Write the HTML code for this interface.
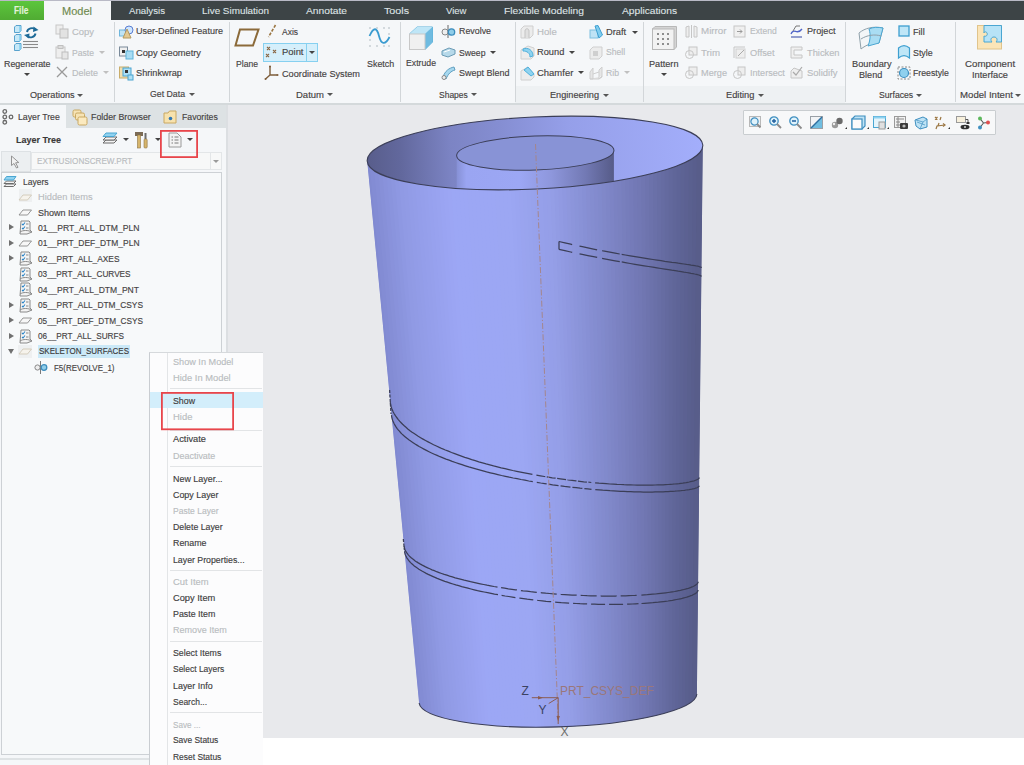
<!DOCTYPE html>
<html><head><meta charset="utf-8">
<style>
html,body{margin:0;padding:0;}
body{width:1024px;height:765px;overflow:hidden;position:relative;background:#ffffff;font-family:"Liberation Sans",sans-serif;}
.t{position:absolute;white-space:nowrap;font-size:9.4px;line-height:12px;color:#454242;-webkit-text-stroke:0.15px currentColor;}
.d{color:#b9bcbf;}
.tab{color:#dfe3e5;font-size:10px;}
svg{overflow:visible}
</style></head><body>
<div style="position:absolute;left:0px;top:0px;width:1024px;height:1px;background:#b9bac6"></div>
<div style="position:absolute;left:0px;top:1px;width:1024px;height:19px;background:#3d4446"></div>
<div style="position:absolute;left:0px;top:1px;width:44px;height:19px;background:linear-gradient(#5cc63c,#50ab33)"></div>
<div style="position:absolute;left:44px;top:1px;width:67px;height:19px;background:#f5f7f8"></div>
<div style="position:absolute;left:0px;top:20px;width:1024px;height:83px;background:#f5f7f9"></div>
<div style="position:absolute;left:515px;top:86px;width:330px;height:17px;background:#eef1f3"></div>
<div style="position:absolute;left:0px;top:103px;width:1024px;height:2px;background:#d4d9db"></div>
<div class="t " style="left:14px;top:4.90px;font-size:10px;color:#e2f2da;font-weight:bold;transform:scaleX(0.8355);transform-origin:0 0;">File</div>
<div class="t " style="left:62px;top:4.90px;font-size:10.5px;color:#6f8a4f;transform:scaleX(1.0486);transform-origin:0 0;">Model</div>
<div class="t tab" style="left:129px;top:4.90px;font-size:9.6px;-webkit-text-stroke:0.1px currentColor;transform:scaleX(1.0074);transform-origin:0 0;">Analysis</div>
<div class="t tab" style="left:202px;top:4.90px;font-size:9.6px;-webkit-text-stroke:0.1px currentColor;transform:scaleX(1.0298);transform-origin:0 0;">Live Simulation</div>
<div class="t tab" style="left:306px;top:4.90px;font-size:9.6px;-webkit-text-stroke:0.1px currentColor;transform:scaleX(1.0671);transform-origin:0 0;">Annotate</div>
<div class="t tab" style="left:384px;top:4.90px;font-size:9.6px;-webkit-text-stroke:0.1px currentColor;transform:scaleX(1.1158);transform-origin:0 0;">Tools</div>
<div class="t tab" style="left:446px;top:4.90px;font-size:9.6px;-webkit-text-stroke:0.1px currentColor;transform:scaleX(0.9939);transform-origin:0 0;">View</div>
<div class="t tab" style="left:504px;top:4.90px;font-size:9.6px;-webkit-text-stroke:0.1px currentColor;transform:scaleX(1.0716);transform-origin:0 0;">Flexible Modeling</div>
<div class="t tab" style="left:622px;top:4.90px;font-size:9.6px;-webkit-text-stroke:0.1px currentColor;transform:scaleX(1.0631);transform-origin:0 0;">Applications</div>
<div style="position:absolute;left:114px;top:22px;width:1px;height:80px;background:#d2d6d9"></div>
<div style="position:absolute;left:229px;top:22px;width:1px;height:80px;background:#d2d6d9"></div>
<div style="position:absolute;left:400px;top:22px;width:1px;height:80px;background:#d2d6d9"></div>
<div style="position:absolute;left:515px;top:22px;width:1px;height:80px;background:#d2d6d9"></div>
<div style="position:absolute;left:643px;top:22px;width:1px;height:80px;background:#d2d6d9"></div>
<div style="position:absolute;left:845px;top:22px;width:1px;height:80px;background:#d2d6d9"></div>
<div style="position:absolute;left:955px;top:22px;width:1px;height:80px;background:#d2d6d9"></div>
<div style="position:absolute;left:228px;top:105px;width:796px;height:633px;background:#e8e9ec"></div>
<div style="position:absolute;left:0px;top:105px;width:228px;height:660px;background:#f5f7f9"></div>
<svg style="position:absolute;left:13px;top:24px" width="27" height="27" viewBox="0 0 27 27">
<g stroke="#4a9ac8" stroke-width="0.9" fill="#c6e8f7">
<path d="M1.5 3 L3 1.5 L8 1.5 L8 7 L6.5 8.5 L1.5 8.5Z"/><path d="M1.5 12 L3 10.5 L8 10.5 L8 16 L6.5 17.5 L1.5 17.5Z"/><path d="M1.5 21 L3 19.5 L8 19.5 L8 25 L6.5 26.5 L1.5 26.5Z"/></g>
<g fill="#7fcdef"><rect x="6.3" y="2" width="1.5" height="6"/><rect x="6.3" y="11" width="1.5" height="6"/><rect x="6.3" y="20" width="1.5" height="6"/></g>
<g stroke="#8a8a8a" stroke-width="1.1"><line x1="10" y1="17.5" x2="25" y2="17.5"/><line x1="10" y1="20.5" x2="25" y2="20.5"/><line x1="10" y1="23.5" x2="25" y2="23.5"/></g>
<path d="M14 8 A5 4.5 0 0 1 22.5 5.5" stroke="#1d6a98" stroke-width="1.9" fill="none"/><path d="M20.5 2.5 L25.5 6 L20 8 Z" fill="#1d6a98"/>
<path d="M22.5 9.5 A5 4.5 0 0 1 14 12" stroke="#1d6a98" stroke-width="1.9" fill="none"/><path d="M16 14.5 L11 11 L16.5 9.5 Z" fill="#1d6a98"/>
</svg>
<div class="t " style="left:3.5px;top:58.10px;font-size:9.6px;transform:scaleX(0.9274);transform-origin:0 0;">Regenerate</div>
<div style="position:absolute;left:23.5px;top:73px;width:0;height:0;border-left:3px solid transparent;border-right:3px solid transparent;border-top:3px solid #444;"></div>
<svg style="position:absolute;left:55px;top:24px" width="15" height="15" viewBox="0 0 15 15"><rect x="1" y="1" width="7" height="9" fill="#eee" stroke="#c8c8c8"/><rect x="5" y="5" width="8" height="9" fill="#e2e2e2" stroke="#bdbdbd"/></svg>
<div class="t d" style="left:72px;top:25.60px;font-size:9.6px;transform:scaleX(0.9819);transform-origin:0 0;">Copy</div>
<svg style="position:absolute;left:55px;top:45px" width="15" height="15" viewBox="0 0 15 15"><rect x="1" y="2" width="9" height="11" fill="#eee" stroke="#c8c8c8"/><rect x="3" y="0.5" width="5" height="3" fill="#ddd" stroke="#c0c0c0"/><rect x="7" y="7" width="6" height="7" fill="#e6e6e6" stroke="#bdbdbd"/></svg>
<div class="t d" style="left:72px;top:46.80px;font-size:9.6px;transform:scaleX(0.8962);transform-origin:0 0;">Paste</div>
<div style="position:absolute;left:99px;top:51px;width:0;height:0;border-left:3px solid transparent;border-right:3px solid transparent;border-top:3px solid #c0c0c0;"></div>
<svg style="position:absolute;left:56px;top:66px" width="12" height="12" viewBox="0 0 12 12"><path d="M1 1 L11 11 M11 1 L1 11" stroke="#9a9a9a" stroke-width="1.3"/></svg>
<div class="t d" style="left:72px;top:66.80px;font-size:9.6px;transform:scaleX(0.9375);transform-origin:0 0;">Delete</div>
<div style="position:absolute;left:103px;top:71px;width:0;height:0;border-left:3px solid transparent;border-right:3px solid transparent;border-top:3px solid #c0c0c0;"></div>
<div class="t " style="left:30px;top:89.10px;font-size:9.6px;transform:scaleX(0.9523);transform-origin:0 0;">Operations</div>
<div style="position:absolute;left:77px;top:93.5px;width:0;height:0;border-left:3px solid transparent;border-right:3px solid transparent;border-top:3px solid #555;"></div>
<svg style="position:absolute;left:119px;top:25px" width="15" height="14" viewBox="0 0 15 14"><rect x="0.5" y="5" width="7" height="6" fill="#bfe3f5" stroke="#6fb6dc"/><circle cx="10" cy="5" r="4" fill="#cfe6ff" stroke="#5a7ed0"/><path d="M4 13 L8 4 L12 13 Z" fill="#e3c891" stroke="#b49a60"/></svg>
<div class="t " style="left:136px;top:25.40px;font-size:9.6px;transform:scaleX(0.9431);transform-origin:0 0;">User-Defined Feature</div>
<svg style="position:absolute;left:119px;top:46px" width="15" height="14" viewBox="0 0 15 14"><rect x="0.5" y="1" width="8" height="9" fill="#f0f0f0" stroke="#7a8a9a"/><rect x="3" y="4" width="3" height="3" fill="#333"/><rect x="7" y="5" width="7" height="8" fill="#a8dcf3" stroke="#5fb3da"/></svg>
<div class="t " style="left:136px;top:47.00px;font-size:9.6px;transform:scaleX(0.9674);transform-origin:0 0;">Copy Geometry</div>
<svg style="position:absolute;left:119px;top:66px" width="15" height="14" viewBox="0 0 15 14"><rect x="0.5" y="1" width="9" height="11" fill="#f2dfb0" stroke="#c9ad6a"/><rect x="4" y="2" width="8" height="8" fill="#aee0f5" stroke="#4ba4d0"/><rect x="6" y="4" width="3" height="3" fill="#333"/><rect x="9" y="9" width="5" height="5" fill="#aee0f5" stroke="#4ba4d0"/></svg>
<div class="t " style="left:136px;top:66.90px;font-size:9.6px;transform:scaleX(0.9583);transform-origin:0 0;">Shrinkwrap</div>
<div class="t " style="left:150px;top:88.10px;font-size:9.6px;transform:scaleX(0.9113);transform-origin:0 0;">Get Data</div>
<div style="position:absolute;left:189px;top:92.5px;width:0;height:0;border-left:3px solid transparent;border-right:3px solid transparent;border-top:3px solid #555;"></div>
<svg style="position:absolute;left:234px;top:28px" width="26" height="19" viewBox="0 0 26 19"><path d="M6 1.5 L24.5 1.5 L19 17.5 L1.5 17.5 Z" fill="none" stroke="#8b6a3a" stroke-width="2"/></svg>
<div class="t " style="left:236px;top:57.80px;font-size:9.6px;transform:scaleX(0.8962);transform-origin:0 0;">Plane</div>
<svg style="position:absolute;left:267px;top:24px" width="10" height="14" viewBox="0 0 10 14"><path d="M8.5 1 L1.5 13" stroke="#9b7642" stroke-width="1.6" stroke-dasharray="3 1.5"/></svg>
<div class="t " style="left:282px;top:25.80px;font-size:9.6px;transform:scaleX(0.8828);transform-origin:0 0;">Axis</div>
<div style="position:absolute;left:263px;top:43px;width:55px;height:19px;background:#d5effb;border:1px solid #86d0f0;box-sizing:border-box"></div>
<div style="position:absolute;left:306px;top:43px;width:1px;height:19px;background:#86d0f0"></div>
<svg style="position:absolute;left:264px;top:46px" width="14" height="14" viewBox="0 0 14 14"><g stroke="#8c6a48" stroke-width="1.1"><path d="M3 1 L6 4 M6 1 L3 4 M9 4 L12 7 M12 4 L9 7 M2 8 L5 11 M5 8 L2 11"/></g></svg>
<div class="t " style="left:282px;top:46.40px;font-size:9.6px;transform:scaleX(0.9829);transform-origin:0 0;">Point</div>
<div style="position:absolute;left:309px;top:51px;width:0;height:0;border-left:3px solid transparent;border-right:3px solid transparent;border-top:3px solid #444;"></div>
<svg style="position:absolute;left:264px;top:65px" width="15" height="15" viewBox="0 0 15 15"><path d="M6 1 L6 10 L13 10 M6 10 L1.5 14" stroke="#7d5d3a" stroke-width="1.4" fill="none"/><circle cx="6" cy="1.5" r="1" fill="#7d5d3a"/><circle cx="13.5" cy="10" r="1" fill="#7d5d3a"/><circle cx="1.5" cy="14" r="1" fill="#7d5d3a"/></svg>
<div class="t " style="left:282px;top:67.50px;font-size:9.6px;transform:scaleX(0.9560);transform-origin:0 0;">Coordinate System</div>
<svg style="position:absolute;left:368px;top:26px" width="23" height="22" viewBox="0 0 23 22"><g fill="#9aa5ad"><circle cx="2" cy="2" r="0.7"/><circle cx="9" cy="2" r="0.7"/><circle cx="16" cy="2" r="0.7"/><circle cx="21" cy="2" r="0.7"/><circle cx="2" cy="20" r="0.7"/><circle cx="9" cy="20" r="0.7"/><circle cx="16" cy="20" r="0.7"/><circle cx="21" cy="20" r="0.7"/><circle cx="2" cy="14" r="0.7"/><circle cx="21" cy="8" r="0.7"/></g><path d="M1.5 10 C6 0, 9 2, 11 10 C13 18, 17 20, 21.5 11" fill="none" stroke="#3a9bd0" stroke-width="1.8"/></svg>
<div class="t " style="left:366.5px;top:57.80px;font-size:9.6px;transform:scaleX(0.9269);transform-origin:0 0;">Sketch</div>
<div class="t " style="left:296px;top:88.60px;font-size:9.6px;transform:scaleX(0.9906);transform-origin:0 0;">Datum</div>
<div style="position:absolute;left:327px;top:93px;width:0;height:0;border-left:3px solid transparent;border-right:3px solid transparent;border-top:3px solid #555;"></div>
<svg style="position:absolute;left:408px;top:25px" width="26" height="26" viewBox="0 0 26 26"><path d="M1.5 9 L9 2 L24.5 2 L24.5 17 L17 24.5 Z" fill="#8ccfee" stroke="#5cb0d8"/><path d="M9 2 L24.5 2 L17 9 L1.5 9Z" fill="#bfe6f7"/><path d="M17 9 L24.5 2 L24.5 17 L17 24.5Z" fill="#6fbbe0"/><rect x="1.5" y="9" width="15.5" height="15.5" fill="#f0f0f0" stroke="#c8c8c8"/></svg>
<div class="t " style="left:406px;top:57.10px;font-size:9.6px;transform:scaleX(0.9069);transform-origin:0 0;">Extrude</div>
<svg style="position:absolute;left:441px;top:25px" width="15" height="13" viewBox="0 0 15 13"><line x1="7" y1="0" x2="7" y2="13" stroke="#666" stroke-width="1"/><circle cx="4" cy="7" r="3" fill="#eee" stroke="#888"/><circle cx="10.5" cy="7" r="3.2" fill="#8fcde9" stroke="#3c8dbd" stroke-width="1.3"/></svg>
<div class="t " style="left:458.5px;top:25.40px;font-size:9.6px;transform:scaleX(0.9229);transform-origin:0 0;">Revolve</div>
<svg style="position:absolute;left:441px;top:46px" width="15" height="12" viewBox="0 0 15 12"><path d="M1 5 L8 2 L14 4 L14 8 L7 11 L1 9 Z" fill="#b6d9ea" stroke="#6b9bb5"/><path d="M3 6 L9 4" stroke="#fff"/></svg>
<div class="t " style="left:458.5px;top:46.60px;font-size:9.6px;transform:scaleX(0.9031);transform-origin:0 0;">Sweep</div>
<div style="position:absolute;left:490px;top:51px;width:0;height:0;border-left:3px solid transparent;border-right:3px solid transparent;border-top:3px solid #444;"></div>
<svg style="position:absolute;left:441px;top:65px" width="15" height="15" viewBox="0 0 15 15"><path d="M2 12 C4 6, 8 3, 13 2 L14 5 C10 6, 7 9, 5 14 Z" fill="#a7d8ef" stroke="#5f9fc0"/><circle cx="3" cy="12.5" r="2" fill="#eee" stroke="#888"/></svg>
<div class="t " style="left:458.5px;top:66.90px;font-size:9.6px;transform:scaleX(0.9374);transform-origin:0 0;">Swept Blend</div>
<div class="t " style="left:439px;top:88.60px;font-size:9.6px;transform:scaleX(0.8849);transform-origin:0 0;">Shapes</div>
<div style="position:absolute;left:471px;top:93px;width:0;height:0;border-left:3px solid transparent;border-right:3px solid transparent;border-top:3px solid #555;"></div>
<svg style="position:absolute;left:520px;top:25px" width="15" height="14" viewBox="0 0 15 14"><path d="M1 4 L4 1 L13 1 L13 10 L10 13 L1 13Z" fill="#ececec" stroke="#cfcfcf"/><path d="M5 13 L5 6 C5 3, 9 3, 9 6 L9 13" fill="#e0e0e0" stroke="#c4c4c4"/></svg>
<div class="t d" style="left:536.7px;top:25.80px;font-size:9.6px;transform:scaleX(1.0033);transform-origin:0 0;">Hole</div>
<svg style="position:absolute;left:520px;top:45px" width="15" height="15" viewBox="0 0 15 15"><path d="M1 5 L1 14 L11 14 L14 11 L14 3 L8 1 Z" fill="#ececec" stroke="#d0d0d0"/><path d="M3 4 C8 2, 13 5, 13 11 L10 12 C10 8, 7 6, 3 6Z" fill="#8fd3f0" stroke="#4fb0dc"/></svg>
<div class="t " style="left:536.7px;top:46.30px;font-size:9.6px;transform:scaleX(0.9653);transform-origin:0 0;">Round</div>
<div style="position:absolute;left:569px;top:51px;width:0;height:0;border-left:3px solid transparent;border-right:3px solid transparent;border-top:3px solid #444;"></div>
<svg style="position:absolute;left:520px;top:66px" width="15" height="15" viewBox="0 0 15 15"><path d="M1 5 L1 14 L11 14 L14 11 L14 8 L8 1 Z" fill="#ececec" stroke="#d0d0d0"/><path d="M4 4 L8 1 L14 8 L11 10Z" fill="#8fd3f0" stroke="#4fb0dc"/></svg>
<div class="t " style="left:536.7px;top:66.80px;font-size:9.6px;transform:scaleX(0.9865);transform-origin:0 0;">Chamfer</div>
<div style="position:absolute;left:578px;top:71px;width:0;height:0;border-left:3px solid transparent;border-right:3px solid transparent;border-top:3px solid #444;"></div>
<svg style="position:absolute;left:589px;top:25px" width="14" height="14" viewBox="0 0 14 14"><rect x="1" y="5" width="8" height="8" fill="#bfe3f5" stroke="#7ec0e0"/><path d="M6 1 L9 0.5 L13.5 10 L10 13 Z" fill="#7fcdf0" stroke="#3e9fd0"/></svg>
<div class="t " style="left:605.8px;top:25.80px;font-size:9.6px;transform:scaleX(0.9713);transform-origin:0 0;">Draft</div>
<div style="position:absolute;left:631.5px;top:30.5px;width:0;height:0;border-left:3px solid transparent;border-right:3px solid transparent;border-top:3px solid #444;"></div>
<svg style="position:absolute;left:589px;top:46px" width="14" height="14" viewBox="0 0 14 14"><path d="M1 4 L4 1 L13 1 L13 10 L10 13 L1 13Z" fill="#ececec" stroke="#cfcfcf"/><rect x="4" y="5" width="5" height="5" fill="#cfcfcf"/></svg>
<div class="t d" style="left:605.8px;top:46.30px;font-size:9.6px;transform:scaleX(0.8996);transform-origin:0 0;">Shell</div>
<svg style="position:absolute;left:589px;top:66px" width="14" height="14" viewBox="0 0 14 14"><path d="M1 6 L4 2 L4 13 L1 13Z M10 4 L13 1 L13 11 L10 13Z M1 13 L10 13 L13 10" fill="#e6e6e6" stroke="#cfcfcf"/><path d="M4 8 L10 6" stroke="#cfcfcf"/></svg>
<div class="t d" style="left:605.8px;top:66.80px;font-size:9.6px;transform:scaleX(0.9024);transform-origin:0 0;">Rib</div>
<div style="position:absolute;left:624px;top:71px;width:0;height:0;border-left:3px solid transparent;border-right:3px solid transparent;border-top:3px solid #c0c0c0;"></div>
<div class="t " style="left:550px;top:89.40px;font-size:9.6px;transform:scaleX(0.9567);transform-origin:0 0;">Engineering</div>
<div style="position:absolute;left:602.7px;top:93.5px;width:0;height:0;border-left:3px solid transparent;border-right:3px solid transparent;border-top:3px solid #555;"></div>
<svg style="position:absolute;left:651px;top:25px" width="27" height="26" viewBox="0 0 27 26"><path d="M1.5 4 L4 1.5 L25.5 1.5 L25.5 22 L23 24.5 Z" fill="#d4d4d4" stroke="#b8b8b8"/><rect x="1.5" y="4" width="21.5" height="20.5" fill="#f2f2f2" stroke="#b8b8b8"/><g fill="#8e8e8e"><rect x="6" y="8" width="2" height="2"/><rect x="11" y="8" width="2" height="2"/><rect x="16" y="8" width="2" height="2"/><rect x="6" y="13" width="2" height="2"/><rect x="11" y="13" width="2" height="2"/><rect x="16" y="13" width="2" height="2"/><rect x="6" y="18" width="2" height="2"/><rect x="11" y="18" width="2" height="2"/><rect x="16" y="18" width="2" height="2"/></g></svg>
<div class="t " style="left:649px;top:57.60px;font-size:9.6px;transform:scaleX(0.9535);transform-origin:0 0;">Pattern</div>
<div style="position:absolute;left:660.5px;top:73.4px;width:0;height:0;border-left:3px solid transparent;border-right:3px solid transparent;border-top:3px solid #444;"></div>
<svg style="position:absolute;left:685px;top:25px" width="13" height="13" viewBox="0 0 13 13"><path d="M1 2 L4 1 L4 12 L1 12Z M12 2 L9 1 L9 12 L12 12Z" fill="#eee" stroke="#c6c6c6"/><line x1="6.5" y1="0" x2="6.5" y2="13" stroke="#c6c6c6"/></svg>
<div class="t d" style="left:701px;top:25.40px;font-size:9.6px;transform:scaleX(1.0181);transform-origin:0 0;">Mirror</div>
<svg style="position:absolute;left:685px;top:46px" width="13" height="13" viewBox="0 0 13 13"><rect x="4" y="1" width="8" height="8" fill="#eee" stroke="#c6c6c6"/><circle cx="4.5" cy="8.5" r="4" fill="none" stroke="#c6c6c6"/></svg>
<div class="t d" style="left:701px;top:46.60px;font-size:9.6px;transform:scaleX(1.0091);transform-origin:0 0;">Trim</div>
<svg style="position:absolute;left:685px;top:66px" width="13" height="13" viewBox="0 0 13 13"><rect x="4" y="1" width="8" height="8" fill="#eee" stroke="#c6c6c6"/><circle cx="4.5" cy="8.5" r="4" fill="none" stroke="#c6c6c6"/></svg>
<div class="t d" style="left:701px;top:67.10px;font-size:9.6px;transform:scaleX(0.9558);transform-origin:0 0;">Merge</div>
<svg style="position:absolute;left:733px;top:25px" width="13" height="13" viewBox="0 0 13 13"><rect x="1" y="1" width="11" height="11" fill="#f0f0f0" stroke="#c6c6c6"/><path d="M4 6.5 L9 6.5 M7 4.5 L9 6.5 L7 8.5" stroke="#999" fill="none"/></svg>
<div class="t d" style="left:749.7px;top:25.40px;font-size:9.6px;transform:scaleX(0.8937);transform-origin:0 0;">Extend</div>
<svg style="position:absolute;left:733px;top:46px" width="13" height="13" viewBox="0 0 13 13"><path d="M1 12 L1 1 L12 1" fill="none" stroke="#c6c6c6"/><rect x="3" y="3" width="9" height="9" fill="#eee" stroke="#d0d0d0"/><path d="M5 10 L11 4" stroke="#aaa"/></svg>
<div class="t d" style="left:749.7px;top:46.60px;font-size:9.6px;transform:scaleX(0.9677);transform-origin:0 0;">Offset</div>
<svg style="position:absolute;left:733px;top:66px" width="13" height="13" viewBox="0 0 13 13"><rect x="5" y="1" width="7" height="8" fill="#eee" stroke="#c6c6c6"/><circle cx="4.5" cy="8.5" r="4" fill="none" stroke="#c6c6c6"/></svg>
<div class="t d" style="left:749.7px;top:67.10px;font-size:9.6px;transform:scaleX(0.9485);transform-origin:0 0;">Intersect</div>
<svg style="position:absolute;left:790px;top:25px" width="13" height="13" viewBox="0 0 13 13"><path d="M1 12 L12 12" stroke="#5060b0" stroke-width="1.2"/><path d="M1 9 C4 2, 7 11, 12 4" fill="none" stroke="#4f64c8" stroke-width="1.3"/><path d="M3 6 L6 1 L10 1" fill="none" stroke="#777"/></svg>
<div class="t " style="left:806.5px;top:25.40px;font-size:9.6px;transform:scaleX(0.9545);transform-origin:0 0;">Project</div>
<svg style="position:absolute;left:790px;top:46px" width="13" height="13" viewBox="0 0 13 13"><path d="M1 1 L12 1 L12 4 L4 4 L4 9 L12 9 L12 12 L1 12Z" fill="#f0f0f0" stroke="#c6c6c6"/></svg>
<div class="t d" style="left:806.5px;top:46.60px;font-size:9.6px;transform:scaleX(0.9674);transform-origin:0 0;">Thicken</div>
<svg style="position:absolute;left:790px;top:66px" width="13" height="13" viewBox="0 0 13 13"><path d="M1 5 L4 2 L12 5 L12 12 L1 12 Z" fill="#eee" stroke="#c6c6c6"/><path d="M3 6 L6 9 L12 1" fill="none" stroke="#aaa" stroke-width="1.2"/></svg>
<div class="t d" style="left:806.5px;top:67.10px;font-size:9.6px;transform:scaleX(0.9859);transform-origin:0 0;">Solidify</div>
<div class="t " style="left:726px;top:89.10px;font-size:9.6px;transform:scaleX(0.9678);transform-origin:0 0;">Editing</div>
<div style="position:absolute;left:758px;top:93.5px;width:0;height:0;border-left:3px solid transparent;border-right:3px solid transparent;border-top:3px solid #555;"></div>
<svg style="position:absolute;left:857px;top:25px" width="28" height="25" viewBox="0 0 28 25"><path d="M2 8 C8 3, 16 1, 26 3 L22 18 C16 17, 9 20, 4 24 Z" fill="#f3f6f8" stroke="#8fa0aa"/><path d="M12 4 C14 10, 13 16, 11 21 L22 18 L26 3 C21 2, 16 2, 12 4Z" fill="#a9ddf3" stroke="#4aa6d2"/><path d="M4 14 C10 10, 18 9, 24 11" fill="none" stroke="#8fa0aa"/></svg>
<div class="t " style="left:851.7px;top:57.90px;font-size:9.6px;transform:scaleX(0.9616);transform-origin:0 0;">Boundary</div>
<div class="t " style="left:858.9px;top:69.20px;font-size:9.6px;transform:scaleX(0.9492);transform-origin:0 0;">Blend</div>
<svg style="position:absolute;left:898px;top:25px" width="12" height="12" viewBox="0 0 12 12"><rect x="1" y="1" width="10" height="10" fill="#bfe6f7" stroke="#3d9fd0" stroke-width="1.3"/></svg>
<div class="t " style="left:912.8px;top:25.60px;font-size:9.6px;transform:scaleX(0.9539);transform-origin:0 0;">Fill</div>
<svg style="position:absolute;left:897px;top:45px" width="14" height="14" viewBox="0 0 14 14"><path d="M1.5 3 C5 0, 9 0, 12.5 3 L12.5 13 C9 10, 5 10, 1.5 13Z" fill="#bfe6f7" stroke="#3d9fd0" stroke-width="1.2"/></svg>
<div class="t " style="left:912.8px;top:46.60px;font-size:9.6px;transform:scaleX(0.9230);transform-origin:0 0;">Style</div>
<svg style="position:absolute;left:897px;top:66px" width="14" height="14" viewBox="0 0 14 14"><rect x="1" y="1" width="12" height="12" fill="none" stroke="#888" stroke-dasharray="2 1.5"/><circle cx="7" cy="7" r="4.5" fill="#8fd0ee" stroke="#3d8fc0" stroke-width="1.2"/></svg>
<div class="t " style="left:912.8px;top:66.90px;font-size:9.6px;transform:scaleX(0.9099);transform-origin:0 0;">Freestyle</div>
<div class="t " style="left:878.6px;top:89.00px;font-size:9.6px;transform:scaleX(0.9030);transform-origin:0 0;">Surfaces</div>
<div style="position:absolute;left:915.7px;top:93.5px;width:0;height:0;border-left:3px solid transparent;border-right:3px solid transparent;border-top:3px solid #555;"></div>
<svg style="position:absolute;left:977px;top:25px" width="26" height="25" viewBox="0 0 26 25"><rect x="0.5" y="0.5" width="24" height="23.5" fill="#fbe5b8" stroke="#e0c48c"/><path d="M7 0.5 L24.5 0.5 L24.5 17 L19 17 C21 15, 20 12, 17 12 C14 12, 13 15, 15 17 L7 17 L7 11 C9 12, 11 10, 10 8 C9 6, 7 7, 7 8Z" fill="#b7e3f7" stroke="#4aa6d2"/></svg>
<div class="t " style="left:964.9px;top:57.90px;font-size:9.6px;transform:scaleX(1.0099);transform-origin:0 0;">Component</div>
<div class="t " style="left:972px;top:69.20px;font-size:9.6px;transform:scaleX(0.9640);transform-origin:0 0;">Interface</div>
<div class="t " style="left:959.5px;top:89.00px;font-size:9.6px;transform:scaleX(1.0036);transform-origin:0 0;">Model Intent</div>
<div style="position:absolute;left:1015px;top:93.5px;width:0;height:0;border-left:3px solid transparent;border-right:3px solid transparent;border-top:3px solid #555;"></div>
<div style="position:absolute;left:66px;top:105px;width:160px;height:23px;background:#dde2e4"></div>
<div style="position:absolute;left:226px;top:105px;width:2px;height:660px;background:#dcdfe2"></div>
<svg style="position:absolute;left:2px;top:109px" width="12" height="16" viewBox="0 0 12 16"><g fill="none" stroke="#6a6a6a" stroke-width="1.3"><circle cx="2.8" cy="2.5" r="1.8"/><circle cx="2.8" cy="8" r="1.8"/><circle cx="2.8" cy="13.3" r="1.8"/><circle cx="9" cy="8" r="1.8"/></g></svg>
<div class="t " style="left:17.8px;top:111.10px;font-size:9.6px;transform:scaleX(0.9112);transform-origin:0 0;">Layer Tree</div>
<svg style="position:absolute;left:72px;top:109px" width="16" height="17" viewBox="0 0 16 17"><rect x="1" y="1" width="8" height="7" rx="1.5" fill="#f6e3b4" stroke="#c9a862"/><rect x="3.5" y="4" width="9" height="7" rx="1.5" fill="#f6e3b4" stroke="#c9a862"/><rect x="6" y="8" width="9" height="8" rx="1.5" fill="#fbeac0" stroke="#c9a862"/></svg>
<div class="t " style="left:90.7px;top:111.10px;font-size:9.6px;transform:scaleX(0.9193);transform-origin:0 0;">Folder Browser</div>
<svg style="position:absolute;left:163px;top:110px" width="15" height="14" viewBox="0 0 15 14"><path d="M1 3 L5 3 L6.5 1 L13 1 L13 13 L1 13 Z" fill="#f7e2ad" stroke="#c9a862"/><circle cx="7.5" cy="8.5" r="1.8" fill="#2f77b5"/></svg>
<div class="t " style="left:182px;top:111.10px;font-size:9.6px;transform:scaleX(0.9074);transform-origin:0 0;">Favorites</div>
<div class="t " style="left:15.5px;top:133.60px;font-size:9.8px;color:#3c3a3a;font-weight:bold;transform:scaleX(0.9178);transform-origin:0 0;">Layer Tree</div>
<svg style="position:absolute;left:102px;top:132px" width="16" height="15" viewBox="0 0 16 15"><g stroke="#6b6b6b" fill="#f4f4f4"><path d="M1 11 L4 8 L15 8 L12 11Z"/><path d="M1 8 L4 5 L15 5 L12 8Z"/></g><path d="M1 4.5 L4 1 L15 1 L12 4.5Z" fill="#8fd2f0" stroke="#4aa6d2"/></svg>
<div style="position:absolute;left:122.6px;top:138px;width:0;height:0;border-left:3px solid transparent;border-right:3px solid transparent;border-top:3px solid #444;"></div>
<svg style="position:absolute;left:134px;top:131px" width="15" height="18" viewBox="0 0 15 18"><rect x="1" y="1" width="8" height="4" fill="#7a6a55"/><rect x="3.5" y="4" width="3" height="13" fill="#d6b56c" stroke="#8e7444" stroke-width="0.6"/><rect x="10.5" y="2" width="2" height="6" fill="#6d6d6d"/><rect x="10" y="8" width="3.2" height="9" rx="1" fill="#d6b56c" stroke="#8e7444" stroke-width="0.6"/></svg>
<div style="position:absolute;left:155px;top:138px;width:0;height:0;border-left:3px solid transparent;border-right:3px solid transparent;border-top:3px solid #444;"></div>
<svg style="position:absolute;left:168px;top:132px" width="14" height="16" viewBox="0 0 14 16"><path d="M1 1 L9 1 L13 5 L13 15 L1 15Z" fill="#f3f3f3" stroke="#9a9a9a"/><g stroke="#7a7a7a"><line x1="3.5" y1="5" x2="5" y2="5"/><line x1="6.5" y1="5" x2="10.5" y2="5"/><line x1="3.5" y1="8" x2="5" y2="8"/><line x1="6.5" y1="8" x2="10.5" y2="8"/><line x1="3.5" y1="11" x2="5" y2="11"/><line x1="6.5" y1="11" x2="10.5" y2="11"/></g></svg>
<div style="position:absolute;left:187.4px;top:138px;width:0;height:0;border-left:3px solid transparent;border-right:3px solid transparent;border-top:3px solid #444;"></div>
<div style="position:absolute;left:1px;top:151px;width:30px;height:21px;background:#eceff1;border:1px solid #dde1e4;box-sizing:border-box"></div>
<svg style="position:absolute;left:10px;top:155px" width="10" height="14" viewBox="0 0 10 14"><path d="M1.5 1 L1.5 10.5 L4 8.5 L6.5 13 L8 12.3 L5.6 7.8 L8.8 7.5 Z" fill="#f2f2f2" stroke="#8a8a8a" stroke-width="0.9"/></svg>
<div style="position:absolute;left:31px;top:152px;width:191px;height:18px;background:#f7f8f8;border:1px solid #e3e6e8;box-sizing:border-box"></div>
<div style="position:absolute;left:210px;top:153px;width:1px;height:16px;background:#e3e6e8"></div>
<div style="position:absolute;left:213px;top:160px;width:0;height:0;border-left:3px solid transparent;border-right:3px solid transparent;border-top:3px solid #9a9a9a;"></div>
<div class="t d" style="left:37.1px;top:155.40px;font-size:9.4px;transform:scaleX(0.8643);transform-origin:0 0;">EXTRUSIONSCREW.PRT</div>
<div style="position:absolute;left:1px;top:172px;width:221px;height:583px;background:#f7f9fa;border:1px solid #cdd1d5;box-sizing:border-box"></div>
<div style="position:absolute;left:0px;top:758px;width:226px;height:2px;background:#dfe3e5"></div>
<svg style="position:absolute;left:3px;top:175px" width="14" height="13" viewBox="0 0 14 13"><g stroke="#6b6b6b" fill="#f4f4f4"><path d="M1 11.5 L3.5 9 L13 9 L10.5 11.5Z"/><path d="M1 8.5 L3.5 6 L13 6 L10.5 8.5Z"/></g><path d="M1 5 L3.5 1.5 L13 1.5 L10.5 5Z" fill="#8fd2f0" stroke="#4aa6d2"/></svg>
<div class="t " style="left:22.9px;top:175.80px;font-size:9.6px;transform:scaleX(0.8855);transform-origin:0 0;">Layers</div>
<div style="position:absolute;left:19px;top:189px;width:13px;height:13px;background:#eef0f1"></div>
<svg style="position:absolute;left:18px;top:193.5px" width="14" height="8" viewBox="0 0 14 8"><path d="M5 1 L13.5 1 L9.5 6 L1 6 Z" fill="#f6f3ec" stroke="#d0c8b8" stroke-width="0.9"/></svg>
<div class="t d" style="left:38.4px;top:191.20px;font-size:9.6px;transform:scaleX(0.9658);transform-origin:0 0;">Hidden Items</div>
<svg style="position:absolute;left:18px;top:209.0px" width="14" height="8" viewBox="0 0 14 8"><path d="M5 1 L13.5 1 L9.5 6 L1 6 Z" fill="#f7f7f7" stroke="#8a8a8a" stroke-width="0.9"/></svg>
<div class="t " style="left:38.4px;top:206.60px;font-size:9.6px;transform:scaleX(0.9375);transform-origin:0 0;">Shown Items</div>
<div style="position:absolute;left:8.5px;top:224.4px;width:0;height:0;border-top:3.5px solid transparent;border-bottom:3.5px solid transparent;border-left:5px solid #707070;"></div>
<svg style="position:absolute;left:18.5px;top:220.4px" width="14" height="15" viewBox="0 0 14 15"><path d="M2 1 L10 1 L11 2 L11 10 L13 12 L8 14 L1 14 Z" fill="#f4f4f4" stroke="#8a8a8a"/><path d="M1 12 C4 10, 9 10, 13 12" fill="none" stroke="#8a8a8a"/><g stroke="#2f86c8" stroke-width="1.1" fill="none"><path d="M3 4 L4 5 L6 2.5"/><path d="M3 8 L4 9 L6 6.5"/></g><g stroke="#888"><line x1="7" y1="4" x2="9.5" y2="4"/><line x1="7" y1="8" x2="9.5" y2="8"/></g></svg>
<div class="t " style="left:38.4px;top:222.00px;font-size:9.6px;transform:scaleX(0.8991);transform-origin:0 0;">01__PRT_ALL_DTM_PLN</div>
<div style="position:absolute;left:8.5px;top:239.85px;width:0;height:0;border-top:3.5px solid transparent;border-bottom:3.5px solid transparent;border-left:5px solid #707070;"></div>
<svg style="position:absolute;left:18px;top:239.85px" width="14" height="8" viewBox="0 0 14 8"><path d="M5 1 L13.5 1 L9.5 6 L1 6 Z" fill="#f7f7f7" stroke="#8a8a8a" stroke-width="0.9"/></svg>
<div class="t " style="left:38.4px;top:237.45px;font-size:9.6px;transform:scaleX(0.8826);transform-origin:0 0;">01__PRT_DEF_DTM_PLN</div>
<div style="position:absolute;left:8.5px;top:255.3px;width:0;height:0;border-top:3.5px solid transparent;border-bottom:3.5px solid transparent;border-left:5px solid #707070;"></div>
<svg style="position:absolute;left:18.5px;top:251.3px" width="14" height="15" viewBox="0 0 14 15"><path d="M2 1 L10 1 L11 2 L11 10 L13 12 L8 14 L1 14 Z" fill="#f4f4f4" stroke="#8a8a8a"/><path d="M1 12 C4 10, 9 10, 13 12" fill="none" stroke="#8a8a8a"/><g stroke="#2f86c8" stroke-width="1.1" fill="none"><path d="M3 4 L4 5 L6 2.5"/><path d="M3 8 L4 9 L6 6.5"/></g><g stroke="#888"><line x1="7" y1="4" x2="9.5" y2="4"/><line x1="7" y1="8" x2="9.5" y2="8"/></g></svg>
<div class="t " style="left:38.4px;top:252.90px;font-size:9.6px;transform:scaleX(0.8698);transform-origin:0 0;">02__PRT_ALL_AXES</div>
<svg style="position:absolute;left:18.5px;top:266.75px" width="14" height="15" viewBox="0 0 14 15"><path d="M2 1 L10 1 L11 2 L11 10 L13 12 L8 14 L1 14 Z" fill="#f4f4f4" stroke="#8a8a8a"/><path d="M1 12 C4 10, 9 10, 13 12" fill="none" stroke="#8a8a8a"/><g stroke="#2f86c8" stroke-width="1.1" fill="none"><path d="M3 4 L4 5 L6 2.5"/><path d="M3 8 L4 9 L6 6.5"/></g><g stroke="#888"><line x1="7" y1="4" x2="9.5" y2="4"/><line x1="7" y1="8" x2="9.5" y2="8"/></g></svg>
<div class="t " style="left:38.4px;top:268.35px;font-size:9.6px;transform:scaleX(0.8582);transform-origin:0 0;">03__PRT_ALL_CURVES</div>
<svg style="position:absolute;left:18.5px;top:282.2px" width="14" height="15" viewBox="0 0 14 15"><path d="M2 1 L10 1 L11 2 L11 10 L13 12 L8 14 L1 14 Z" fill="#f4f4f4" stroke="#8a8a8a"/><path d="M1 12 C4 10, 9 10, 13 12" fill="none" stroke="#8a8a8a"/><g stroke="#2f86c8" stroke-width="1.1" fill="none"><path d="M3 4 L4 5 L6 2.5"/><path d="M3 8 L4 9 L6 6.5"/></g><g stroke="#888"><line x1="7" y1="4" x2="9.5" y2="4"/><line x1="7" y1="8" x2="9.5" y2="8"/></g></svg>
<div class="t " style="left:38.4px;top:283.80px;font-size:9.6px;transform:scaleX(0.8906);transform-origin:0 0;">04__PRT_ALL_DTM_PNT</div>
<div style="position:absolute;left:8.5px;top:301.65px;width:0;height:0;border-top:3.5px solid transparent;border-bottom:3.5px solid transparent;border-left:5px solid #707070;"></div>
<svg style="position:absolute;left:18.5px;top:297.65px" width="14" height="15" viewBox="0 0 14 15"><path d="M2 1 L10 1 L11 2 L11 10 L13 12 L8 14 L1 14 Z" fill="#f4f4f4" stroke="#8a8a8a"/><path d="M1 12 C4 10, 9 10, 13 12" fill="none" stroke="#8a8a8a"/><g stroke="#2f86c8" stroke-width="1.1" fill="none"><path d="M3 4 L4 5 L6 2.5"/><path d="M3 8 L4 9 L6 6.5"/></g><g stroke="#888"><line x1="7" y1="4" x2="9.5" y2="4"/><line x1="7" y1="8" x2="9.5" y2="8"/></g></svg>
<div class="t " style="left:38.4px;top:299.25px;font-size:9.6px;transform:scaleX(0.8725);transform-origin:0 0;">05__PRT_ALL_DTM_CSYS</div>
<div style="position:absolute;left:8.5px;top:317.1px;width:0;height:0;border-top:3.5px solid transparent;border-bottom:3.5px solid transparent;border-left:5px solid #707070;"></div>
<svg style="position:absolute;left:18px;top:317.1px" width="14" height="8" viewBox="0 0 14 8"><path d="M5 1 L13.5 1 L9.5 6 L1 6 Z" fill="#f7f7f7" stroke="#8a8a8a" stroke-width="0.9"/></svg>
<div class="t " style="left:38.4px;top:314.70px;font-size:9.6px;transform:scaleX(0.8574);transform-origin:0 0;">05__PRT_DEF_DTM_CSYS</div>
<div style="position:absolute;left:8.5px;top:332.55px;width:0;height:0;border-top:3.5px solid transparent;border-bottom:3.5px solid transparent;border-left:5px solid #707070;"></div>
<svg style="position:absolute;left:18.5px;top:328.55px" width="14" height="15" viewBox="0 0 14 15"><path d="M2 1 L10 1 L11 2 L11 10 L13 12 L8 14 L1 14 Z" fill="#f4f4f4" stroke="#8a8a8a"/><path d="M1 12 C4 10, 9 10, 13 12" fill="none" stroke="#8a8a8a"/><g stroke="#2f86c8" stroke-width="1.1" fill="none"><path d="M3 4 L4 5 L6 2.5"/><path d="M3 8 L4 9 L6 6.5"/></g><g stroke="#888"><line x1="7" y1="4" x2="9.5" y2="4"/><line x1="7" y1="8" x2="9.5" y2="8"/></g></svg>
<div class="t " style="left:38.4px;top:330.15px;font-size:9.6px;transform:scaleX(0.8547);transform-origin:0 0;">06__PRT_ALL_SURFS</div>
<div style="position:absolute;left:7.5px;top:349.2px;width:0;height:0;border-left:3.5px solid transparent;border-right:3.5px solid transparent;border-top:5px solid #707070;"></div>
<div style="position:absolute;left:18px;top:345px;width:14px;height:13px;background:#eef0f1"></div>
<svg style="position:absolute;left:18px;top:347.7px" width="14" height="8" viewBox="0 0 14 8"><path d="M5 1 L13.5 1 L9.5 6 L1 6 Z" fill="#f6f3ec" stroke="#d0c8b8" stroke-width="0.9"/></svg>
<div style="position:absolute;left:37.7px;top:344.7px;width:92.3px;height:13.3px;background:#cbe9f8"></div>
<div class="t " style="left:38.5px;top:345.30px;font-size:9.6px;color:#3a3838;transform:scaleX(0.8329);transform-origin:0 0;">SKELETON_SURFACES</div>
<svg style="position:absolute;left:34px;top:361px" width="14" height="13" viewBox="0 0 14 13"><line x1="6.5" y1="0" x2="6.5" y2="13" stroke="#7a7a7a"/><circle cx="3.5" cy="6.5" r="2.6" fill="#eee" stroke="#888"/><circle cx="10" cy="6.5" r="2.8" fill="#8fcde9" stroke="#3c8dbd" stroke-width="1.3"/></svg>
<div class="t " style="left:54px;top:361.60px;font-size:9.6px;transform:scaleX(0.8302);transform-origin:0 0;">F5(REVOLVE_1)</div>
<div style="position:absolute;left:149px;top:352px;width:114px;height:413px;background:#fcfcfd;border-left:1px solid #c9cdd1;border-top:1px solid #d6d9dc;box-sizing:border-box"></div>
<div style="position:absolute;left:167px;top:353px;width:1px;height:412px;background:#e3e5e7"></div>
<div style="position:absolute;left:150px;top:392px;width:113px;height:16px;background:#d3eefb"></div>
<div class="t d" style="left:173.3px;top:355.70px;font-size:9.6px;transform:scaleX(0.9516);transform-origin:0 0;">Show In Model</div>
<div class="t d" style="left:173.3px;top:372.10px;font-size:9.6px;transform:scaleX(0.9746);transform-origin:0 0;">Hide In Model</div>
<div class="t " style="left:173.3px;top:394.50px;font-size:9.6px;color:#403d3d;transform:scaleX(0.9167);transform-origin:0 0;">Show</div>
<div class="t d" style="left:173.3px;top:411.00px;font-size:9.6px;transform:scaleX(0.9831);transform-origin:0 0;">Hide</div>
<div class="t " style="left:173.3px;top:433.30px;font-size:9.6px;color:#403d3d;transform:scaleX(0.9666);transform-origin:0 0;">Activate</div>
<div class="t d" style="left:173.3px;top:449.80px;font-size:9.6px;transform:scaleX(0.9332);transform-origin:0 0;">Deactivate</div>
<div class="t " style="left:173.3px;top:472.50px;font-size:9.6px;color:#403d3d;transform:scaleX(0.9301);transform-origin:0 0;">New Layer...</div>
<div class="t " style="left:173.3px;top:488.60px;font-size:9.6px;color:#403d3d;transform:scaleX(0.9274);transform-origin:0 0;">Copy Layer</div>
<div class="t d" style="left:173.3px;top:504.70px;font-size:9.6px;transform:scaleX(0.8886);transform-origin:0 0;">Paste Layer</div>
<div class="t " style="left:173.3px;top:521.10px;font-size:9.6px;color:#403d3d;transform:scaleX(0.9117);transform-origin:0 0;">Delete Layer</div>
<div class="t " style="left:173.3px;top:537.10px;font-size:9.6px;color:#403d3d;transform:scaleX(0.9237);transform-origin:0 0;">Rename</div>
<div class="t " style="left:173.3px;top:553.50px;font-size:9.6px;color:#403d3d;transform:scaleX(0.9134);transform-origin:0 0;">Layer Properties...</div>
<div class="t d" style="left:173.3px;top:575.90px;font-size:9.6px;transform:scaleX(0.9816);transform-origin:0 0;">Cut Item</div>
<div class="t " style="left:173.3px;top:592.10px;font-size:9.6px;color:#403d3d;transform:scaleX(0.9672);transform-origin:0 0;">Copy Item</div>
<div class="t " style="left:173.3px;top:608.30px;font-size:9.6px;color:#403d3d;transform:scaleX(0.9224);transform-origin:0 0;">Paste Item</div>
<div class="t d" style="left:173.3px;top:624.40px;font-size:9.6px;transform:scaleX(0.9428);transform-origin:0 0;">Remove Item</div>
<div class="t " style="left:173.3px;top:646.70px;font-size:9.6px;color:#403d3d;transform:scaleX(0.9148);transform-origin:0 0;">Select Items</div>
<div class="t " style="left:173.3px;top:663.30px;font-size:9.6px;color:#403d3d;transform:scaleX(0.8826);transform-origin:0 0;">Select Layers</div>
<div class="t " style="left:173.3px;top:679.50px;font-size:9.6px;color:#403d3d;transform:scaleX(0.9280);transform-origin:0 0;">Layer Info</div>
<div class="t " style="left:173.3px;top:695.70px;font-size:9.6px;color:#403d3d;transform:scaleX(0.8853);transform-origin:0 0;">Search...</div>
<div class="t d" style="left:173.3px;top:718.60px;font-size:9.6px;transform:scaleX(0.8423);transform-origin:0 0;">Save ...</div>
<div class="t " style="left:173.3px;top:734.40px;font-size:9.6px;color:#403d3d;transform:scaleX(0.8756);transform-origin:0 0;">Save Status</div>
<div class="t " style="left:173.3px;top:750.50px;font-size:9.6px;color:#403d3d;transform:scaleX(0.8792);transform-origin:0 0;">Reset Status</div>
<div style="position:absolute;left:170px;top:388px;width:92px;height:1px;background:#e2e4e6"></div>
<div style="position:absolute;left:170px;top:430px;width:92px;height:1px;background:#e2e4e6"></div>
<div style="position:absolute;left:170px;top:466px;width:92px;height:1px;background:#e2e4e6"></div>
<div style="position:absolute;left:170px;top:570px;width:92px;height:1px;background:#e2e4e6"></div>
<div style="position:absolute;left:170px;top:641px;width:92px;height:1px;background:#e2e4e6"></div>
<div style="position:absolute;left:170px;top:712px;width:92px;height:1px;background:#e2e4e6"></div>
<svg style="position:absolute;left:161px;top:392px" width="73" height="38" viewBox="0 0 73 38"><rect x="0.9" y="0.9" width="71.2" height="36.4" fill="none" stroke="#e8454b" stroke-width="1.8"/></svg>
<svg style="position:absolute;left:0;top:0" width="1024" height="765" viewBox="0 0 1024 765"><defs>
<linearGradient id="gBody" gradientUnits="userSpaceOnUse" x1="367" y1="0" x2="703" y2="0">
<stop offset="0" stop-color="#8089d0"/><stop offset="0.06" stop-color="#8c96e0"/><stop offset="0.25" stop-color="#9ca7f5"/>
<stop offset="0.42" stop-color="#9ca7f3"/><stop offset="0.55" stop-color="#949ee7"/><stop offset="0.7" stop-color="#8189cb"/>
<stop offset="0.82" stop-color="#7177b3"/><stop offset="0.92" stop-color="#60669a"/><stop offset="1" stop-color="#575c89"/>
</linearGradient>
<linearGradient id="gIn" gradientUnits="userSpaceOnUse" x1="367" y1="0" x2="703" y2="0">
<stop offset="0" stop-color="#585d8b"/><stop offset="0.1" stop-color="#62689d"/><stop offset="0.25" stop-color="#7c84c4"/>
<stop offset="0.4" stop-color="#858ed2"/><stop offset="0.6" stop-color="#959fe9"/><stop offset="1" stop-color="#a3aefb"/>
</linearGradient>
<linearGradient id="gCyl" gradientUnits="userSpaceOnUse" x1="457" y1="0" x2="614" y2="0">
<stop offset="0" stop-color="#8791d6"/><stop offset="0.06" stop-color="#9aa5f2"/><stop offset="0.4" stop-color="#9ca7f4"/>
<stop offset="0.6" stop-color="#8e97dc"/><stop offset="0.82" stop-color="#7279b4"/><stop offset="1" stop-color="#565b88"/>
</linearGradient>
<clipPath id="cRim"><ellipse cx="535" cy="153" rx="168" ry="36" transform="rotate(-2.7 535 153)"/></clipPath>
</defs><clipPath id="cBody"><path d="M367.2 160.9 L419.1 703 A139 29 -1.85 0 0 696.9 694 L702.8 145.1 A168 36 -2.7 0 1 367.2 160.9 Z"/></clipPath><g clip-path="url(#cBody)"><path d="M367.2 160.9 L419.1 703 A139 29 -1.85 0 0 696.9 694 L702.8 145.1 A168 36 -2.7 0 1 367.2 160.9 Z" fill="url(#gBody)"/><path d="M344.94 107.51 L367.44 106.43 L428.62 757.08 L410.69 757.63Z" fill="rgb(129, 138, 209)"/><path d="M364.04 106.59 L371.50 106.23 L431.85 756.98 L425.91 757.16Z" fill="rgb(131, 140, 212)"/><path d="M368.11 106.40 L375.57 106.04 L435.09 756.88 L429.15 757.06Z" fill="rgb(133, 142, 214)"/><path d="M372.17 106.20 L379.63 105.84 L438.33 756.78 L432.39 756.96Z" fill="rgb(135, 144, 216)"/><path d="M376.23 106.00 L383.70 105.64 L441.57 756.68 L435.62 756.86Z" fill="rgb(137, 146, 219)"/><path d="M380.30 105.81 L387.76 105.45 L444.81 756.58 L438.86 756.76Z" fill="rgb(138, 148, 221)"/><path d="M384.36 105.61 L391.82 105.25 L448.05 756.48 L442.10 756.67Z" fill="rgb(140, 150, 223)"/><path d="M388.43 105.41 L395.89 105.05 L451.28 756.38 L445.34 756.57Z" fill="rgb(142, 152, 226)"/><path d="M392.49 105.22 L399.95 104.86 L454.52 756.29 L448.58 756.47Z" fill="rgb(144, 154, 228)"/><path d="M396.55 105.02 L404.02 104.66 L457.76 756.19 L451.82 756.37Z" fill="rgb(145, 155, 229)"/><path d="M400.62 104.83 L408.08 104.47 L461.00 756.09 L455.05 756.27Z" fill="rgb(146, 156, 231)"/><path d="M404.68 104.63 L412.14 104.27 L464.24 755.99 L458.29 756.17Z" fill="rgb(147, 157, 232)"/><path d="M408.75 104.43 L416.21 104.07 L467.48 755.89 L461.53 756.07Z" fill="rgb(148, 158, 234)"/><path d="M412.81 104.24 L420.27 103.88 L470.71 755.79 L464.77 755.97Z" fill="rgb(149, 159, 235)"/><path d="M416.87 104.04 L424.34 103.68 L473.95 755.69 L468.01 755.87Z" fill="rgb(150, 160, 236)"/><path d="M420.94 103.85 L428.40 103.49 L477.19 755.59 L471.25 755.77Z" fill="rgb(151, 161, 238)"/><path d="M425.00 103.65 L432.46 103.29 L480.43 755.49 L474.48 755.67Z" fill="rgb(152, 162, 239)"/><path d="M429.07 103.45 L436.53 103.09 L483.67 755.39 L477.72 755.58Z" fill="rgb(153, 163, 240)"/><path d="M433.13 103.26 L440.59 102.90 L486.91 755.29 L480.96 755.48Z" fill="rgb(154, 164, 242)"/><path d="M437.19 103.06 L444.66 102.70 L490.14 755.20 L484.20 755.38Z" fill="rgb(155, 165, 243)"/><path d="M441.26 102.86 L448.72 102.50 L493.38 755.10 L487.44 755.28Z" fill="rgb(156, 166, 244)"/><path d="M445.32 102.67 L452.78 102.31 L496.62 755.00 L490.68 755.18Z" fill="rgb(156, 167, 245)"/><path d="M449.39 102.47 L456.85 102.11 L499.86 754.90 L493.91 755.08Z" fill="rgb(156, 167, 245)"/><path d="M453.45 102.28 L460.91 101.92 L503.10 754.80 L497.15 754.98Z" fill="rgb(156, 167, 245)"/><path d="M457.52 102.08 L464.98 101.72 L506.34 754.70 L500.39 754.88Z" fill="rgb(156, 167, 245)"/><path d="M461.58 101.88 L469.04 101.52 L509.57 754.60 L503.63 754.78Z" fill="rgb(156, 167, 244)"/><path d="M465.64 101.69 L473.10 101.33 L512.81 754.50 L506.87 754.68Z" fill="rgb(156, 167, 244)"/><path d="M469.71 101.49 L477.17 101.13 L516.05 754.40 L510.11 754.59Z" fill="rgb(156, 167, 244)"/><path d="M473.77 101.29 L481.23 100.93 L519.29 754.30 L513.34 754.49Z" fill="rgb(156, 167, 244)"/><path d="M477.84 101.10 L485.30 100.74 L522.53 754.21 L516.58 754.39Z" fill="rgb(156, 167, 244)"/><path d="M481.90 100.90 L489.36 100.54 L525.77 754.11 L519.82 754.29Z" fill="rgb(156, 167, 244)"/><path d="M485.96 100.71 L493.43 100.35 L529.00 754.01 L523.06 754.19Z" fill="rgb(156, 167, 244)"/><path d="M490.03 100.51 L497.49 100.15 L532.24 753.91 L526.30 754.09Z" fill="rgb(156, 167, 243)"/><path d="M494.09 100.31 L501.55 99.95 L535.48 753.81 L529.54 753.99Z" fill="rgb(156, 167, 243)"/><path d="M498.16 100.12 L505.62 99.76 L538.72 753.71 L532.77 753.89Z" fill="rgb(156, 167, 243)"/><path d="M502.22 99.92 L509.68 99.56 L541.96 753.61 L536.01 753.79Z" fill="rgb(156, 167, 243)"/><path d="M506.28 99.73 L513.75 99.37 L545.20 753.51 L539.25 753.69Z" fill="rgb(155, 166, 242)"/><path d="M510.35 99.53 L517.81 99.17 L548.43 753.41 L542.49 753.59Z" fill="rgb(154, 165, 241)"/><path d="M514.41 99.33 L521.87 98.97 L551.67 753.31 L545.73 753.50Z" fill="rgb(154, 164, 239)"/><path d="M518.48 99.14 L525.94 98.78 L554.91 753.21 L548.97 753.40Z" fill="rgb(153, 164, 238)"/><path d="M522.54 98.94 L530.00 98.58 L558.15 753.12 L552.20 753.30Z" fill="rgb(152, 163, 237)"/><path d="M526.60 98.74 L534.07 98.38 L561.39 753.02 L555.44 753.20Z" fill="rgb(151, 162, 236)"/><path d="M530.67 98.55 L538.13 98.19 L564.63 752.92 L558.68 753.10Z" fill="rgb(151, 161, 235)"/><path d="M534.73 98.35 L542.19 97.99 L567.86 752.82 L561.92 753.00Z" fill="rgb(150, 160, 234)"/><path d="M538.80 98.16 L546.26 97.80 L571.10 752.72 L565.16 752.90Z" fill="rgb(149, 159, 233)"/><path d="M542.86 97.96 L550.32 97.60 L574.34 752.62 L568.40 752.80Z" fill="rgb(149, 159, 232)"/><path d="M546.92 97.76 L554.39 97.40 L577.58 752.52 L571.63 752.70Z" fill="rgb(148, 158, 230)"/><path d="M550.99 97.57 L558.45 97.21 L580.82 752.42 L574.87 752.60Z" fill="rgb(146, 156, 228)"/><path d="M555.05 97.37 L562.51 97.01 L584.06 752.32 L578.11 752.51Z" fill="rgb(145, 154, 226)"/><path d="M559.12 97.17 L566.58 96.81 L587.29 752.22 L581.35 752.41Z" fill="rgb(143, 152, 224)"/><path d="M563.18 96.98 L570.64 96.62 L590.53 752.13 L584.59 752.31Z" fill="rgb(142, 151, 221)"/><path d="M567.24 96.78 L574.71 96.42 L593.77 752.03 L587.83 752.21Z" fill="rgb(140, 149, 219)"/><path d="M571.31 96.59 L578.77 96.23 L597.01 751.93 L591.06 752.11Z" fill="rgb(138, 148, 217)"/><path d="M575.37 96.39 L582.83 96.03 L600.25 751.83 L594.30 752.01Z" fill="rgb(137, 146, 215)"/><path d="M579.44 96.19 L586.90 95.83 L603.49 751.73 L597.54 751.91Z" fill="rgb(135, 144, 213)"/><path d="M583.50 96.00 L590.96 95.64 L606.72 751.63 L600.78 751.81Z" fill="rgb(134, 142, 210)"/><path d="M587.56 95.80 L595.03 95.44 L609.96 751.53 L604.02 751.71Z" fill="rgb(132, 141, 208)"/><path d="M591.63 95.61 L599.09 95.25 L613.20 751.43 L607.26 751.61Z" fill="rgb(131, 139, 206)"/><path d="M595.69 95.41 L603.15 95.05 L616.44 751.33 L610.49 751.51Z" fill="rgb(129, 138, 204)"/><path d="M599.76 95.21 L607.22 94.85 L619.68 751.23 L613.73 751.42Z" fill="rgb(128, 136, 201)"/><path d="M603.82 95.02 L611.28 94.66 L622.92 751.13 L616.97 751.32Z" fill="rgb(126, 134, 199)"/><path d="M607.88 94.82 L615.35 94.46 L626.15 751.04 L620.21 751.22Z" fill="rgb(125, 132, 197)"/><path d="M611.95 94.62 L619.41 94.26 L629.39 750.94 L623.45 751.12Z" fill="rgb(123, 130, 194)"/><path d="M616.01 94.43 L623.47 94.07 L632.63 750.84 L626.69 751.02Z" fill="rgb(122, 129, 192)"/><path d="M620.08 94.23 L627.54 93.87 L635.87 750.74 L629.92 750.92Z" fill="rgb(120, 127, 189)"/><path d="M624.14 94.04 L631.60 93.68 L639.11 750.64 L633.16 750.82Z" fill="rgb(118, 125, 187)"/><path d="M628.21 93.84 L635.67 93.48 L642.35 750.54 L636.40 750.72Z" fill="rgb(117, 123, 185)"/><path d="M632.27 93.64 L639.73 93.28 L645.58 750.44 L639.64 750.62Z" fill="rgb(115, 121, 182)"/><path d="M636.33 93.45 L643.79 93.09 L648.82 750.34 L642.88 750.52Z" fill="rgb(114, 120, 180)"/><path d="M640.40 93.25 L647.86 92.89 L652.06 750.24 L646.12 750.43Z" fill="rgb(112, 118, 177)"/><path d="M644.46 93.05 L651.92 92.69 L655.30 750.14 L649.35 750.33Z" fill="rgb(110, 116, 174)"/><path d="M648.53 92.86 L655.99 92.50 L658.54 750.05 L652.59 750.23Z" fill="rgb(108, 114, 171)"/><path d="M652.59 92.66 L660.05 92.30 L661.78 749.95 L655.83 750.13Z" fill="rgb(106, 112, 168)"/><path d="M656.65 92.47 L664.12 92.11 L665.01 749.85 L659.07 750.03Z" fill="rgb(104, 110, 165)"/><path d="M660.72 92.27 L668.18 91.91 L668.25 749.75 L662.31 749.93Z" fill="rgb(102, 108, 162)"/><path d="M664.78 92.07 L672.24 91.71 L671.49 749.65 L665.55 749.83Z" fill="rgb(100, 106, 159)"/><path d="M668.85 91.88 L676.31 91.52 L674.73 749.55 L668.78 749.73Z" fill="rgb(98, 104, 156)"/><path d="M672.91 91.68 L680.37 91.32 L677.97 749.45 L672.02 749.63Z" fill="rgb(96, 102, 153)"/><path d="M676.97 91.49 L684.44 91.13 L681.21 749.35 L675.26 749.53Z" fill="rgb(94, 100, 151)"/><path d="M681.04 91.29 L688.50 90.93 L684.44 749.25 L678.50 749.43Z" fill="rgb(93, 99, 148)"/><path d="M685.10 91.09 L692.56 90.73 L687.68 749.15 L681.74 749.34Z" fill="rgb(92, 97, 146)"/><path d="M689.17 90.90 L696.63 90.54 L690.92 749.05 L684.98 749.24Z" fill="rgb(90, 96, 143)"/><path d="M693.23 90.70 L700.69 90.34 L694.16 748.96 L688.21 749.14Z" fill="rgb(89, 94, 141)"/><path d="M697.29 90.50 L720.46 89.39 L709.91 748.47 L691.45 749.04Z" fill="rgb(88, 93, 138)"/></g><ellipse cx="535" cy="153" rx="168" ry="36" transform="rotate(-2.7 535 153)" fill="url(#gIn)"/><g clip-path="url(#cRim)"><path d="M456.7 155.7 L456.7 230 L613.9 230 L613.9 150.4 A78.7 17 -1.93 0 1 456.7 155.7 Z" fill="url(#gCyl)"/></g><ellipse cx="535.3" cy="153" rx="78.7" ry="17" transform="rotate(-1.93 535.3 153)" fill="#8893d6" stroke="#3b3e57" stroke-width="1"/><ellipse cx="535" cy="153" rx="168" ry="36" transform="rotate(-2.7 535 153)" fill="none" stroke="#3b3e57" stroke-width="1.1"/><path d="M419.1 703 A139 29 -1.85 0 0 696.9 694" fill="none" stroke="#3b3e57" stroke-width="1.1"/><path d="M390.3 402.1 L390.5 403.7 L390.8 405.3 L391.2 406.9 L391.7 408.5 L392.4 410.1 L393.1 411.7 L393.9 413.3 L394.9 414.9 L395.9 416.5 L397.1 418.0 L398.3 419.6 L399.6 421.2 L401.1 422.7 L402.6 424.3 L404.2 425.8 L406.0 427.3 L407.8 428.9 L409.7 430.4 L411.7 431.9 L413.8 433.3 L416.0 434.8 L418.2 436.3 L420.6 437.7 L423.0 439.1 L425.5 440.5 L428.1 441.9 L430.8 443.3 L433.6 444.7 L436.4 446.0 L439.3 447.4 L442.2 448.7 L445.3 450.0 L448.4 451.2 L451.5 452.5 L454.7 453.7 L458.0 454.9 L461.4 456.1 L464.8 457.3 L468.2 458.4 L471.7 459.6 L475.2 460.7 L478.8 461.8 L482.5 462.8 L486.1 463.9 L489.8 464.9 L493.6 465.9 L497.4 466.8 L501.2 467.8 L505.0 468.7 L508.9 469.6 L512.8 470.5 L516.7 471.3 L520.6 472.1 L524.5 472.9 L528.5 473.7 L532.4 474.4" fill="none" stroke="#3b3e57" stroke-width="1.25"/><path d="M536.4 475.1 L540.4 475.8 L544.4 476.5 L548.3 477.1 L552.3 477.8 L556.3 478.3 L560.3 478.9 L564.2 479.4 L568.1 480.0 L572.1 480.4 L576.0 480.9 L579.8 481.3 L583.7 481.8 L587.5 482.1 L591.3 482.5" fill="none" stroke="#3b3e57" stroke-width="1.25" stroke-dasharray="9 1.5"/><path d="M595.1 482.8 L598.9 483.2 L602.6 483.4 L606.2 483.7 L609.9 484.0 L613.4 484.2 L617.0 484.4 L620.5 484.5 L623.9 484.7 L627.3 484.8 L630.6 484.9 L633.9 485.0 L637.1 485.1 L640.3 485.1 L643.4 485.1 L646.4 485.1 L649.4 485.1 L652.3 485.1 L655.1 485.0 L657.8 484.9 L660.5 484.9 L663.1 484.8 L665.6 484.6 L668.1 484.5 L670.4 484.3 L672.7 484.2 L674.9 484.0 L677.0 483.8 L679.0 483.6 L680.9 483.3 L682.8 483.1 L684.5 482.8 L686.2 482.6 L687.7 482.3 L689.2 482.0 L690.5 481.7 L691.8 481.4 L693.0 481.1 L694.1 480.8 L695.0 480.5 L695.9 480.2 L696.7 479.8 L697.3 479.5 L697.9 479.2 L698.4 478.8 L698.8 478.5 L699.0 478.1 L699.2 477.8 L699.2 477.4" fill="none" stroke="#3b3e57" stroke-width="1.25"/><path d="M391.5 415.2 L391.7 416.6 L392.0 418.1 L392.4 419.6 L392.9 421.0 L393.6 422.5 L394.3 424.0 L395.1 425.4 L396.0 426.9 L397.0 428.3 L398.2 429.8 L399.4 431.2 L400.7 432.7 L402.1 434.1 L403.6 435.5 L405.3 436.9 L407.0 438.3 L408.8 439.7 L410.7 441.1 L412.7 442.4 L414.7 443.8 L416.9 445.1 L419.1 446.5 L421.5 447.8 L423.9 449.1 L426.4 450.4 L429.0 451.7 L431.6 453.0 L434.3 454.2 L437.1 455.4 L440.0 456.7 L443.0 457.9 L446.0 459.1 L449.1 460.2 L452.2 461.4 L455.4 462.5 L458.7 463.6 L462.0 464.7 L465.4 465.8 L468.8 466.9 L472.3 467.9 L475.8 468.9 L479.4 469.9 L483.0 470.9 L486.6 471.9 L490.3 472.8 L494.1 473.7 L497.8 474.6 L501.6 475.5 L505.4 476.3 L509.3 477.2 L513.2 478.0 L517.1 478.7 L521.0 479.5 L524.9 480.2 L528.8 481.0 L532.8 481.7" fill="none" stroke="#3b3e57" stroke-width="1.25"/><path d="M536.8 482.3 L540.7 483.0 L544.7 483.6 L548.6 484.2 L552.6 484.8 L556.6 485.3 L560.5 485.8 L564.5 486.4 L568.4 486.8 L572.3 487.3 L576.2 487.7 L580.1 488.2 L583.9 488.5 L587.7 488.9 L591.5 489.3" fill="none" stroke="#3b3e57" stroke-width="1.25" stroke-dasharray="10 2"/><path d="M595.3 489.6 L599.0 489.9 L602.7 490.2 L606.4 490.4 L610.0 490.7 L613.6 490.9 L617.1 491.1 L620.6 491.3 L624.0 491.4 L627.4 491.6 L630.7 491.7 L634.0 491.8 L637.2 491.9 L640.3 491.9 L643.4 492.0 L646.5 492.0 L649.4 492.0 L652.3 492.0 L655.1 491.9 L657.9 491.9 L660.5 491.8 L663.1 491.8 L665.6 491.7 L668.1 491.6 L670.4 491.4 L672.7 491.3 L674.9 491.2 L677.0 491.0 L679.0 490.8 L680.9 490.7 L682.7 490.5 L684.5 490.3 L686.1 490.0 L687.7 489.8 L689.1 489.6 L690.5 489.3 L691.7 489.1 L692.9 488.8 L694.0 488.6 L695.0 488.3 L695.8 488.0 L696.6 487.8 L697.3 487.5 L697.8 487.2 L698.3 486.9 L698.7 486.6 L698.9 486.3 L699.1 486.0 L699.1 485.7" fill="none" stroke="#3b3e57" stroke-width="1.25"/><path d="M404.0 546.0 L404.2 547.0 L404.5 548.1 L404.8 549.2 L405.3 550.3 L405.8 551.4 L406.5 552.4 L407.2 553.5 L408.1 554.6 L409.0 555.6 L410.1 556.7 L411.2 557.7 L412.5 558.8 L413.8 559.8 L415.2 560.9 L416.7 561.9 L418.3 562.9 L420.0 563.9 L421.8 564.9 L423.7 565.9 L425.6 566.9 L427.7 567.9 L429.8 568.8 L432.0 569.8 L434.3 570.7 L436.6 571.7 L439.1 572.6 L441.6 573.5 L444.2 574.4 L446.9 575.2 L449.6 576.1 L452.4 576.9 L455.2 577.8 L458.2 578.6 L461.2 579.4 L464.2 580.2 L467.3 580.9 L470.5 581.7 L473.7 582.4 L477.0 583.1 L480.3 583.8 L483.6 584.5 L487.0 585.2 L490.5 585.8 L494.0 586.5 L497.5 587.1" fill="none" stroke="#3b3e57" stroke-width="1.25"/><path d="M501.1 587.7 L504.7 588.2 L508.3 588.8 L512.0 589.3 L515.6 589.8 L519.3 590.3 L523.1 590.8 L526.8 591.2 L530.6 591.7 L534.3 592.1 L538.1 592.5 L541.9 592.8 L545.7 593.2 L549.5 593.5 L553.3 593.8 L557.1 594.1 L560.9 594.4 L564.7 594.6 L568.5 594.8 L572.2 595.1 L576.0 595.2 L579.7 595.4 L583.4 595.5 L587.1 595.7 L590.8 595.8 L594.4 595.9 L598.1 595.9 L601.6 596.0 L605.2 596.0 L608.7 596.0 L612.2 596.0 L615.6 596.0 L619.0 595.9 L622.4 595.8 L625.7 595.8 L628.9 595.6 L632.1 595.5 L635.3 595.4 L638.4 595.2" fill="none" stroke="#3b3e57" stroke-width="1.25" stroke-dasharray="16 4"/><path d="M641.4 595.1 L644.4 594.9 L647.3 594.7 L650.1 594.4 L652.9 594.2 L655.6 594.0 L658.2 593.7 L660.8 593.4 L663.3 593.1 L665.7 592.8 L668.1 592.5 L670.3 592.2 L672.5 591.8 L674.6 591.5 L676.7 591.1 L678.6 590.7 L680.5 590.3 L682.2 589.9 L683.9 589.5 L685.5 589.1 L687.0 588.7 L688.4 588.3 L689.7 587.8 L690.9 587.4 L692.1 586.9 L693.1 586.5 L694.1 586.0 L694.9 585.5 L695.6 585.1 L696.3 584.6 L696.8 584.1 L697.3 583.6 L697.6 583.1 L697.9 582.6 L698.1 582.2 L698.1 581.7" fill="none" stroke="#3b3e57" stroke-width="1.25"/><path d="M404.6 551.2 L404.7 552.4 L405.0 553.5 L405.3 554.7 L405.8 555.8 L406.4 556.9 L407.0 558.1 L407.8 559.2 L408.6 560.3 L409.6 561.5 L410.6 562.6 L411.8 563.7 L413.0 564.8 L414.3 565.9 L415.8 567.0 L417.3 568.1 L418.9 569.2 L420.6 570.2 L422.4 571.3 L424.2 572.3 L426.2 573.4 L428.2 574.4 L430.4 575.4 L432.6 576.4 L434.9 577.4 L437.2 578.4 L439.7 579.4 L442.2 580.3 L444.8 581.3 L447.4 582.2 L450.1 583.1 L452.9 584.0 L455.8 584.9 L458.7 585.7 L461.7 586.6 L464.8 587.4 L467.9 588.2 L471.0 589.0 L474.2 589.8 L477.5 590.6 L480.8 591.3 L484.1 592.0 L487.6 592.7 L491.0 593.4 L494.5 594.1 L498.0 594.7" fill="none" stroke="#3b3e57" stroke-width="1.25"/><path d="M501.6 595.4 L505.1 596.0 L508.8 596.5 L512.4 597.1 L516.1 597.7 L519.8 598.2 L523.5 598.7 L527.2 599.2 L531.0 599.6 L534.7 600.1 L538.5 600.5 L542.3 600.9 L546.1 601.3 L549.9 601.6 L553.6 602.0 L557.4 602.3 L561.2 602.6 L565.0 602.8 L568.8 603.1 L572.5 603.3 L576.3 603.5 L580.0 603.7 L583.7 603.8 L587.4 604.0 L591.0 604.1 L594.7 604.2 L598.3 604.3 L601.9 604.3 L605.4 604.4 L608.9 604.4 L612.4 604.4 L615.8 604.4 L619.2 604.3 L622.5 604.3 L625.8 604.2 L629.0 604.1 L632.2 604.0 L635.4 603.8 L638.5 603.7" fill="none" stroke="#3b3e57" stroke-width="1.25" stroke-dasharray="14 4"/><path d="M641.5 603.5 L644.4 603.3 L647.3 603.1 L650.2 602.9 L652.9 602.7 L655.6 602.4 L658.3 602.2 L660.8 601.9 L663.3 601.6 L665.7 601.3 L668.1 601.0 L670.3 600.6 L672.5 600.3 L674.6 599.9 L676.6 599.5 L678.6 599.2 L680.4 598.8 L682.2 598.4 L683.9 597.9 L685.4 597.5 L686.9 597.1 L688.3 596.6 L689.7 596.2 L690.9 595.7 L692.0 595.3 L693.0 594.8 L694.0 594.3 L694.8 593.9 L695.6 593.4 L696.2 592.9 L696.8 592.4 L697.2 591.9 L697.6 591.4 L697.8 590.9 L698.0 590.4 L698.0 589.9" fill="none" stroke="#3b3e57" stroke-width="1.25"/><path d="M559.0 241.5 L564.9 242.9 L570.7 244.2 L576.5 245.5 L582.3 246.7 L587.9 247.9 L593.5 249.1 L599.1 250.2 L604.5 251.2 L609.9 252.2 L615.1 253.2 L620.3 254.1 L625.3 255.0 L630.3 255.9 L635.1 256.7 L639.8 257.4 L644.3 258.1 L648.7 258.8 L653.0 259.5 L657.1 260.1 L661.0 260.7 L664.8 261.3 L668.5 261.8 L671.9 262.3 L675.2 262.7 L678.3 263.2 L681.2 263.6 L684.0 264.0 L686.5 264.4 L688.9 264.7 L691.1 265.1 L693.0 265.4 L694.8 265.7 L696.4 266.0 L697.7 266.2 L698.9 266.5 L699.8 266.8 L700.5 267.0 L701.1 267.3 L701.4 267.5 L701.5 267.7" fill="none" stroke="#3b3e57" stroke-width="1.25" stroke-dasharray="13.5 7.5 18 5 18 2 400"/><path d="M559.0 249.4 L564.9 250.7 L570.7 252.0 L576.5 253.2 L582.2 254.4 L587.9 255.6 L593.5 256.7 L599.0 257.8 L604.5 258.9 L609.8 259.9 L615.1 260.8 L620.2 261.7 L625.3 262.6 L630.2 263.5 L635.0 264.3 L639.7 265.1 L644.2 265.8 L648.6 266.5 L652.9 267.2 L657.0 267.9 L661.0 268.5 L664.8 269.1 L668.4 269.6 L671.8 270.2 L675.1 270.7 L678.2 271.2 L681.2 271.6 L683.9 272.1 L686.5 272.5 L688.8 272.9 L691.0 273.3 L692.9 273.6 L694.7 274.0 L696.3 274.3 L697.6 274.7 L698.8 275.0 L699.7 275.3 L700.4 275.6 L701.0 275.9 L701.3 276.2 L701.4 276.5" fill="none" stroke="#3b3e57" stroke-width="1.25" stroke-dasharray="13.5 7.5 18 5 18 2 400"/><path d="M559 241.4 L559 249.5" fill="none" stroke="#3b3e57" stroke-width="1.25"/><path d="M389.6 390 L391 414" fill="none" stroke="#3b3e57" stroke-width="1.25" stroke-dasharray="3 1.5"/><path d="M403.3 539 L404.4 550" fill="none" stroke="#3b3e57" stroke-width="1.25" stroke-dasharray="3 1.5"/><path d="M535.5 144 L558.2 722" fill="none" stroke="#a4868c" stroke-width="1" stroke-dasharray="6 2 1.2 2"/><path d="M558.2 697.7 L531.8 697.7 M558.2 697.7 L548.7 703.5 M558.2 697.7 L558.2 724" stroke="#8a5c52" stroke-width="1" fill="none"/><path d="M538 696 L543 697.7 L538 699.4 Z M556.5 716 L558.2 721 L559.9 716 Z" fill="#8a5c52"/></svg>
<div class="t " style="left:521.6px;top:685.40px;font-size:12px;color:#3b4262;-webkit-text-stroke:0;">Z</div>
<div class="t " style="left:538.4px;top:704.30px;font-size:12px;color:#3b4262;-webkit-text-stroke:0;">Y</div>
<div class="t " style="left:560.4px;top:725.90px;font-size:12px;color:#6e6e6e;-webkit-text-stroke:0;">X</div>
<div class="t " style="left:559.7px;top:685.10px;font-size:12.5px;color:#9a777a;-webkit-text-stroke:0;transform:scaleX(0.9589);transform-origin:0 0;">PRT_CSYS_DEF</div>
<div style="position:absolute;left:743px;top:110px;width:253px;height:25px;background:#f7f8f9;border:1px solid #c9cdd0;box-sizing:border-box;border-radius:1px"></div>
<svg style="position:absolute;left:749px;top:116px" width="13" height="13" viewBox="0 0 13 13"><rect x="0.5" y="0.5" width="11" height="10" fill="#eef0f2" stroke="#b8b8b8"/><circle cx="5.5" cy="5.5" r="3.6" fill="#dff2fb" stroke="#3f8fc0" stroke-width="1.2"/><path d="M8 8 L11.5 11.5" stroke="#8a8a8a" stroke-width="1.8"/></svg>
<svg style="position:absolute;left:769px;top:116px" width="13" height="13" viewBox="0 0 13 13"><circle cx="5" cy="5" r="4.2" fill="#dff2fb" stroke="#3f8fc0" stroke-width="1.3"/><path d="M3 5 L7 5 M5 3 L5 7" stroke="#1f5f9f" stroke-width="1.4"/><path d="M8 8 L12 12" stroke="#8a8a8a" stroke-width="1.8"/></svg>
<svg style="position:absolute;left:789px;top:116px" width="14" height="13" viewBox="0 0 14 13"><circle cx="5" cy="5" r="4.2" fill="#dff2fb" stroke="#3f8fc0" stroke-width="1.3"/><path d="M3 5 L7 5" stroke="#1f5f9f" stroke-width="1.5"/><path d="M8 8 L12.5 12.5" stroke="#8a8a8a" stroke-width="1.8"/></svg>
<svg style="position:absolute;left:810px;top:116px" width="13" height="13" viewBox="0 0 13 13"><rect x="0.5" y="0.5" width="12" height="12" fill="#f2f4f6" stroke="#9aa0a6"/><path d="M1 12 L12 1 L12 12Z" fill="#6fbde0"/><path d="M1 12 L12 1" stroke="#2f6f9f" stroke-width="1.4"/></svg>
<svg style="position:absolute;left:830px;top:116px" width="16" height="14" viewBox="0 0 16 14"><circle cx="5" cy="9" r="3.2" fill="#9a9a9a"/><circle cx="9.5" cy="5" r="3.2" fill="#6a6a6a"/><circle cx="4" cy="8" r="1.2" fill="#f0f0f0"/></svg>
<div style="position:absolute;left:845px;top:127px;width:0;height:0;border-left:2.5px solid transparent;border-bottom:2.5px solid #333;"></div>
<svg style="position:absolute;left:851px;top:115px" width="16" height="15" viewBox="0 0 16 15"><path d="M1 4 L4 1 L14 1 L14 11 L11 14 L1 14Z" fill="#bfe3f5" stroke="#3f8fc0" stroke-width="1.2"/><rect x="1" y="4" width="10" height="10" fill="#fbfbfb" stroke="#3f8fc0" stroke-width="1.2"/></svg>
<div style="position:absolute;left:867px;top:127px;width:0;height:0;border-left:2.5px solid transparent;border-bottom:2.5px solid #333;"></div>
<svg style="position:absolute;left:873px;top:116px" width="14" height="14" viewBox="0 0 14 14"><rect x="0.5" y="0.5" width="12" height="11" fill="#e5f4fb" stroke="#4aa6d2"/><rect x="0.5" y="0.5" width="12" height="2" fill="#8fd2f0"/><rect x="6" y="6" width="6" height="7" fill="#e0e0e0" stroke="#9a9a9a"/></svg>
<div style="position:absolute;left:887px;top:127px;width:0;height:0;border-left:2.5px solid transparent;border-bottom:2.5px solid #333;"></div>
<svg style="position:absolute;left:894px;top:116px" width="14" height="14" viewBox="0 0 14 14"><rect x="0.5" y="0.5" width="11" height="11" fill="#f2f2f2" stroke="#9a9a9a"/><g stroke="#8a8a8a"><line x1="2" y1="3" x2="10" y2="3"/><line x1="2" y1="6" x2="6" y2="6"/><line x1="2" y1="9" x2="6" y2="9"/><line x1="4" y1="1" x2="4" y2="11"/></g><rect x="6" y="7" width="8" height="6" rx="1" fill="#3a3a3a"/><circle cx="10" cy="10" r="1.6" fill="#bbb"/></svg>
<svg style="position:absolute;left:914px;top:116px" width="14" height="14" viewBox="0 0 14 14"><path d="M1 4 L9 1 L13 3 L13 11 L6 13 L2 10Z" fill="#bfe3f5" stroke="#3f8fc0"/><path d="M2 4 L9 6 L13 3 M9 6 L6 13 M3 6 L11 9" stroke="#3f8fc0" fill="none" stroke-width="0.7"/></svg>
<svg style="position:absolute;left:934px;top:116px" width="15" height="14" viewBox="0 0 15 14"><g stroke="#9b7642" stroke-width="1.2" fill="none"><path d="M1 1 L3.5 3.5 M3.5 1 L1 3.5"/><path d="M7 1 L6 4"/><path d="M5 7 L4 10"/><path d="M2 13 L3 10 L11 9"/><path d="M9 7.5 L11 9 L9 10.5"/></g></svg>
<div style="position:absolute;left:948px;top:127px;width:0;height:0;border-left:2.5px solid transparent;border-bottom:2.5px solid #333;"></div>
<svg style="position:absolute;left:956px;top:116px" width="14" height="14" viewBox="0 0 14 14"><rect x="0.5" y="0.5" width="9" height="6" fill="#f7f0dc" stroke="#9a9a9a"/><path d="M9.5 3.5 L12 3.5 L12 7" stroke="#555" fill="none"/><rect x="10.5" y="6" width="3" height="2" fill="#333"/><ellipse cx="9" cy="11" rx="4.5" ry="2.3" fill="#2e2e2e"/><circle cx="9" cy="11" r="1" fill="#ddd"/></svg>
<svg style="position:absolute;left:977px;top:116px" width="13" height="14" viewBox="0 0 13 14"><path d="M3 2.5 L6.5 7 L11 6.5 M6.5 7 L3 11.5" stroke="#555" stroke-width="1.1" fill="none"/><circle cx="3" cy="2.5" r="2" fill="#5cb85c"/><circle cx="11" cy="6.5" r="2" fill="#e05050"/><circle cx="3" cy="11.5" r="2" fill="#3f8fc0"/></svg>
<svg style="position:absolute;left:160px;top:130px" width="38" height="28" viewBox="0 0 38 28"><rect x="0.9" y="0.9" width="36.2" height="26.2" fill="none" stroke="#e8454b" stroke-width="1.8"/></svg>
</body></html>
